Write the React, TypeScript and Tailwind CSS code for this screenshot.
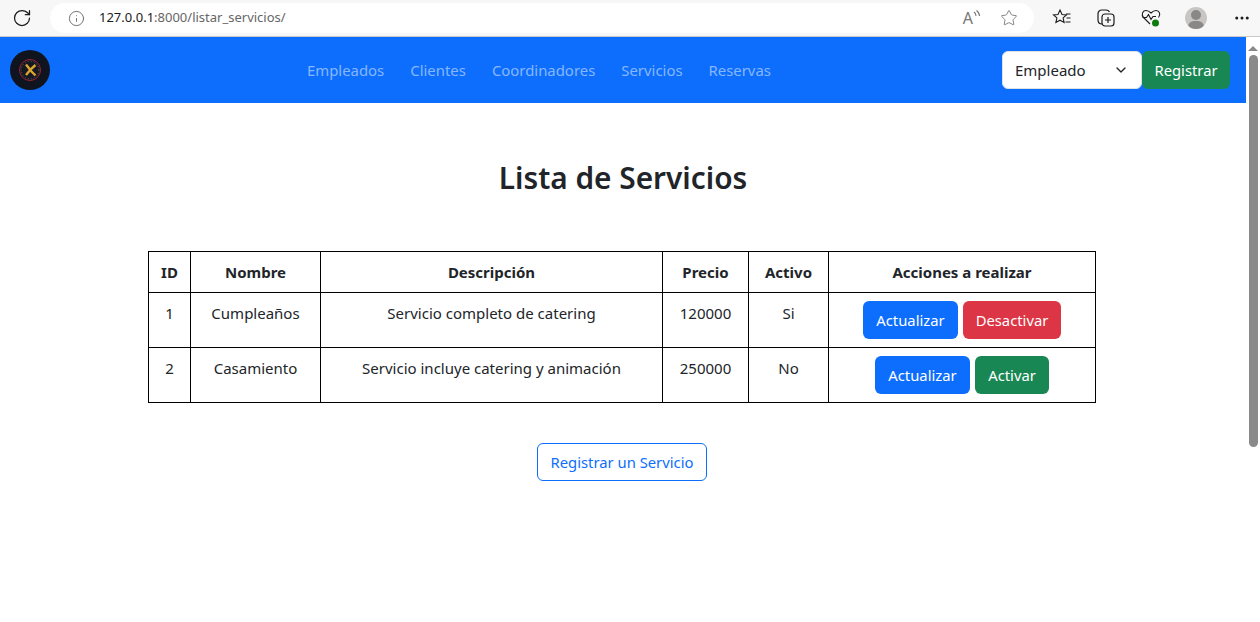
import { RotateCw, Info, Star, ChevronDown, MoreHorizontal } from "lucide-react";

const font = "font-['Noto_Sans','Open_Sans',sans-serif]";

const Logo = () => (
  <svg width="40" height="40" viewBox="0 0 40 40">
    <circle cx="20" cy="20" r="20" fill="#10141f" />
    <circle cx="20" cy="20" r="10.500" fill="#151821" stroke="#9b2335" strokeWidth="1" />
    <circle cx="20" cy="20" r="8.800" fill="none" stroke="#5a5e66" strokeWidth="1" strokeDasharray="1 2" />
    <path d="M16 14.500L21.500 21.500L25.500 25.500M25.500 15L21 19L16 25" fill="none" stroke="#dca52e" strokeWidth="2.400" />
  </svg>
);

const BrowserBar = () => (
  <div className="h-[37px] bg-[#f7f7f7] border-b border-[#c9c9c9] flex items-center">
    <RotateCw size={20} strokeWidth={1.5} className="ml-[12px] text-[#1c1c1c]" />
    <div className="ml-[18px] w-[984px] h-[30px] bg-white rounded-full flex items-center">
      <Info size={17} strokeWidth={1.3} className="ml-[18px] text-[#666]" />
      <span className="ml-[14px] text-[13px] font-['Noto_Sans',sans-serif] text-[#1c1c1c]">
        127.0.0.1<span className="text-[#666]">:8000/listar_servicios/</span>
      </span>
      <div className="ml-auto flex items-center gap-[19px] mr-[16px] text-[#777]">
        <span className="text-[16px] leading-none flex items-start">
          A
          <svg width="8" height="9" viewBox="0 0 8 9" fill="none" stroke="currentColor" strokeWidth="1.100">
            <path d="M1 2c1.500 1 2 2 2 4M3.500 0.500c2 1.500 3 3.500 3 5.500" />
          </svg>
        </span>
        <Star size={18} strokeWidth={1.2} />
      </div>
    </div>
    <div className="flex items-center ml-[18px]">
      <svg width="20" height="20" viewBox="0 0 20 20" fill="none" stroke="#1c1c1c" strokeWidth="1.100" className="mr-[24px]">
        <path d="M8 2l2 4.500 4.500.4-3.400 3 1 4.600L8 12.200l-4.100 2.300 1-4.600-3.400-3 4.500-.4z" />
        <path d="M14 6h4.500M14.500 10h4M13.500 14h5" />
      </svg>
      <svg width="20" height="20" viewBox="0 0 20 20" fill="none" stroke="#1c1c1c" strokeWidth="1.200" className="mr-[24px]">
        <path d="M6 16c-2 0-4-1-4-4V6c0-2 1-4 4-4h4c2 0 3 1 3.500 2" />
        <rect x="6" y="6" width="12" height="12" rx="3" />
        <path d="M12 9v6M9 12h6" />
      </svg>
      <svg width="22" height="22" viewBox="0 0 22 22" fill="none" stroke="#1c1c1c" strokeWidth="1.100" className="mr-[23px]">
        <path d="M10 17L3.500 10.500C1 8 2.500 3.500 6 3.500c2 0 3.500 1 5 2.500 1.500-1.500 3-2.500 5-2.500 3.500 0 5 4 2.500 7" />
        <path d="M2.500 10.500h4l2-3 2.500 5 2-3h3" />
        <circle cx="15.500" cy="16" r="3.500" fill="#107c10" stroke="none" />
      </svg>
      <div className="w-[22px] h-[22px] rounded-full bg-[#c8c6c4] overflow-hidden relative mr-[26px]">
        <div className="absolute left-[6px] top-[3px] w-[10px] h-[10px] rounded-full bg-[#8a8886]" />
        <div className="absolute left-[3px] top-[14px] w-[16px] h-[12px] rounded-full bg-[#8a8886]" />
      </div>
      <MoreHorizontal size={18} className="text-[#1c1c1c]" />
    </div>
  </div>
);

const NavBar = () => (
  <nav className="h-[66px] bg-[#0d6efd] flex items-center pl-[10px] pr-[16px]">
    <Logo />
    <ul className="flex gap-[26px] ml-[257px] text-[#86b7fe] text-[14.9px]">
      <li>Empleados</li>
      <li>Clientes</li>
      <li>Coordinadores</li>
      <li>Servicios</li>
      <li>Reservas</li>
    </ul>
    <div className="ml-auto flex">
      <div className="w-[140px] h-[38px] bg-white border border-[#dee2e6] rounded-[6px] flex items-center px-[12px] justify-between text-[#212529] text-[15px]">
        Empleado
        <ChevronDown size={16} strokeWidth={2} />
      </div>
      <button className="w-[88px] h-[38px] bg-[#198754] text-white rounded-[6px] text-[14.8px]">Registrar</button>
    </div>
  </nav>
);

const Btn = ({ label, color }: { label: string; color: string }) => (
  <button className={`h-[38px] rounded-[6px] text-white text-[14.8px] ${color}`}>{label}</button>
);

const rows = [
  { id: 1, nombre: "Cumpleaños", desc: "Servicio completo de catering", precio: "120000", activo: "Si", other: "Desactivar", color: "bg-[#dc3545] w-[98px]" },
  { id: 2, nombre: "Casamiento", desc: "Servicio incluye catering y animación", precio: "250000", activo: "No", other: "Activar", color: "bg-[#198754] w-[74px]" },
];

const td = "border border-black px-2 pt-[9px] align-top text-center";
const th = "border border-black px-2 h-[41px] text-center font-bold";

export default function App() {
  return (
    <div className={`h-[622px] overflow-hidden bg-white flex flex-col ${font} text-[#212529]`}>
      <BrowserBar />
      <div className="flex flex-1 min-h-0">
        <div className="flex-1 min-w-0">
          <NavBar />
          <h1 className="text-[29.800px] font-semibold text-center mt-[51px] leading-[48px]">Lista de Servicios</h1>
          <table className="mt-[49px] ml-[148px] w-[948px] border-collapse table-fixed text-[15px]">
            <thead>
              <tr>
                <th className={`${th} w-[42px]`}>ID</th>
                <th className={`${th} w-[130px]`}>Nombre</th>
                <th className={`${th} w-[342px]`}>Descripción</th>
                <th className={`${th} w-[86px]`}>Precio</th>
                <th className={`${th} w-[80px]`}>Activo</th>
                <th className={th}>Acciones a realizar</th>
              </tr>
            </thead>
            <tbody>
              {rows.map((r) => (
                <tr key={r.id} className="h-[55px]">
                  <td className={td}>{r.id}</td>
                  <td className={td}>{r.nombre}</td>
                  <td className={td}>{r.desc}</td>
                  <td className={td}>{r.precio}</td>
                  <td className={td}>{r.activo}</td>
                  <td className="border border-black px-2 pt-2 align-top text-center">
                    <div className="flex justify-center gap-[5px]">
                      <Btn label="Actualizar" color="bg-[#0d6efd] w-[95px]" />
                      <Btn label={r.other} color={r.color} />
                    </div>
                  </td>
                </tr>
              ))}
            </tbody>
          </table>
          <div className="flex justify-center mt-[40px] pr-[2px]">
            <button className="h-[38px] w-[170px] rounded-[6px] border border-[#0d6efd] text-[#0d6efd] text-[14.8px]">Registrar un Servicio</button>
          </div>
        </div>
        <div className="w-[14px] bg-white relative flex flex-col items-center">
          <div className="w-0 h-0 mt-[9px] border-x-[5px] border-x-transparent border-b-[5px] border-b-[#8a8a8a]" />
          <div className="w-[9px] h-[392px] mt-[4px] bg-[#8a8a8a] rounded-full" />
        </div>
      </div>
    </div>
  );
}
